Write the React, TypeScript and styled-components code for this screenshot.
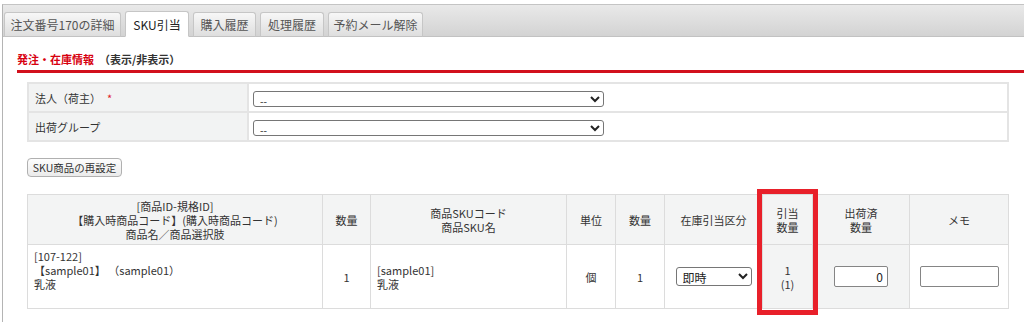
import styled, { createGlobalStyle } from 'styled-components';

const GlobalStyle = createGlobalStyle`
  html, body {
    margin: 0;
    background: #fff;
    overflow: hidden;
  }
  body {
    font-family: "Noto Sans CJK JP", "Noto Sans", sans-serif;
    font-size: 11px;
    color: #333;
  }
`;

/*
 *  panel + tabs
 */
const Panel = styled.div`
  margin: 4px 0 0 2px;
  width: 1040px;
  height: 330px;
  border-top: 1px solid #c4c4c4;
  border-left: 1px solid #b4b4b4;
`;

const TabStrip = styled.ul`
  display: flex;
  align-items: flex-end;
  gap: 4px;
  box-sizing: border-box;
  height: 32px;
  margin: 0;
  padding: 0 0 0 1px;
  list-style: none;
  background: linear-gradient(#e9e9e9, #d3d3d3);
  border-bottom: 1px solid #c2c2c2;
`;

const Tab = styled.li<{ $active?: boolean; $w: number }>`
  box-sizing: border-box;
  width: ${(p) => p.$w}px;
  height: ${(p) => (p.$active ? 26 : 25)}px;
  margin-bottom: -1px;
  display: flex;
  align-items: center;
  justify-content: center;
  border: 1px solid #c6c6c6;
  border-bottom-color: ${(p) => (p.$active ? '#fff' : '#c2c2c2')};
  border-radius: 3px 3px 0 0;
  background: ${(p) => (p.$active ? '#fff' : 'linear-gradient(#f7f7f7, #dedede)')};
  color: ${(p) => (p.$active ? '#222' : '#555')};
  font-size: 12px;
  white-space: nowrap;
`;

/*
 *  section heading
 */
const SectionHead = styled.div`
  margin: 0 6px 0 14px;
  padding: 14px 0 3px;
  line-height: 16px;
  border-bottom: 3px solid #d2101c;
  font-weight: bold;
  font-size: 11px;
`;

const SectionTitle = styled.span`
  color: #d7000f;
`;

const Toggle = styled.span`
  margin-left: 5px;
  color: #333;
`;

const Content = styled.div`
  padding: 9px 0 0 24px;
`;

/*
 *  form table
 */
const FormTable = styled.table`
  width: 982px;
  border-collapse: collapse;
  border: 2px solid #e4e4e4;
`;

const FormRow = styled.tr`
  height: 29px;
  border-bottom: 2px solid #e4e4e4;
`;

const Label = styled.th`
  width: 206px;
  padding: 0 6px;
  text-align: left;
  font-weight: normal;
  background: #f2f3f3;
  border-right: 2px solid #e4e4e4;
  color: #333;
`;

const Required = styled.span`
  margin-left: 6px;
  color: #e0202a;
`;

const Value = styled.td`
  padding: 0 4px;
`;

const Select = styled.select<{ $w: number }>`
  box-sizing: border-box;
  width: ${(p) => p.$w}px;
  height: ${(p) => (p.$w > 100 ? 16 : 19)}px;
  padding: 0 2px;
  border: 1px solid #767676;
  border-radius: 3px;
  background: #fff;
  font-family: inherit;
  font-size: ${(p) => (p.$w > 100 ? 10 : 12)}px;
  color: #222;
  vertical-align: middle;
`;

const ResetButton = styled.button`
  display: block;
  box-sizing: border-box;
  width: 95px;
  height: 19px;
  margin-top: 16px;
  padding: 0;
  border: 1px solid #b0b0b0;
  border-radius: 4px;
  background: linear-gradient(#fdfdfd, #ebebeb);
  font-family: inherit;
  font-size: 10.5px;
  color: #333;
`;

/*
 *  SKU table
 */
const TableWrap = styled.div`
  position: relative;
  width: 981px;
  margin-top: 17px;
`;

const SkuTable = styled.table`
  width: 981px;
  table-layout: fixed;
  border-collapse: collapse;
  border: 1px solid #dcdcdc;
  line-height: 14px;
`;

const Head = styled.th`
  height: 49px;
  padding: 0 4px;
  background: #f3f4f4;
  border: 1px solid #dcdcdc;
  font-weight: normal;
  text-align: center;
  color: #333;
`;

const Cell = styled.td<{ $align?: string; $shade?: boolean }>`
  height: 63px;
  padding: 0 6px;
  border: 1px solid #dcdcdc;
  text-align: ${(p) => p.$align || 'center'};
  background: ${(p) => (p.$shade ? '#f3f4f4' : '#fff')};
  color: #333;
`;

const NumInput = styled.input<{ $w: number; $right?: boolean }>`
  box-sizing: border-box;
  width: ${(p) => p.$w}px;
  height: 21px;
  padding: 0 4px;
  border: 1px solid #858585;
  border-radius: 2px;
  font-family: inherit;
  font-size: 12px;
  text-align: ${(p) => (p.$right ? 'right' : 'left')};
  color: #222;
`;

const Highlight = styled.div`
  position: absolute;
  left: 730px;
  top: -5px;
  width: 61px;
  height: 126px;
  box-sizing: border-box;
  border: 5px solid #e8202a;
  pointer-events: none;
`;

const tabs = [
  { label: '注文番号170の詳細', w: 117 },
  { label: 'SKU引当', w: 64, active: true },
  { label: '購入履歴', w: 63 },
  { label: '処理履歴', w: 64 },
  { label: '予約メール解除', w: 95 },
];

const cols = [295, 48, 196, 49, 49, 98, 50, 97, 99];

export default function App() {
  return (
    <>
      <GlobalStyle />
      <Panel>
        <TabStrip>
          {tabs.map((t) => (
            <Tab key={t.label} $w={t.w} $active={t.active}>
              {t.label}
            </Tab>
          ))}
        </TabStrip>

        <SectionHead>
          <SectionTitle>発注・在庫情報</SectionTitle>
          <Toggle>（表示/非表示）</Toggle>
        </SectionHead>

        <Content>
          <FormTable>
            <tbody>
              <FormRow>
                <Label>
                  法人（荷主）<Required>*</Required>
                </Label>
                <Value>
                  <Select $w={351}>
                    <option>--</option>
                  </Select>
                </Value>
              </FormRow>
              <FormRow>
                <Label>出荷グループ</Label>
                <Value>
                  <Select $w={351}>
                    <option>--</option>
                  </Select>
                </Value>
              </FormRow>
            </tbody>
          </FormTable>

          <ResetButton>SKU商品の再設定</ResetButton>

          <TableWrap>
            <SkuTable>
              <colgroup>
                {cols.map((w, i) => (
                  <col key={i} style={{ width: w }} />
                ))}
              </colgroup>
              <thead>
                <tr>
                  <Head>
                    [商品ID-規格ID]
                    <br />
                    【購入時商品コード】(購入時商品コード)
                    <br />
                    商品名／商品選択肢
                  </Head>
                  <Head>数量</Head>
                  <Head>
                    商品SKUコード
                    <br />
                    商品SKU名
                  </Head>
                  <Head>単位</Head>
                  <Head>数量</Head>
                  <Head>在庫引当区分</Head>
                  <Head>
                    引当
                    <br />
                    数量
                  </Head>
                  <Head>
                    出荷済
                    <br />
                    数量
                  </Head>
                  <Head>メモ</Head>
                </tr>
              </thead>
              <tbody>
                <tr>
                  <Cell $align="left">
                    [107-122]
                    <br />
                    【sample01】 （sample01）
                    <br />
                    乳液
                    <br />
                    &nbsp;
                  </Cell>
                  <Cell>1</Cell>
                  <Cell $align="left">
                    [sample01]
                    <br />
                    乳液
                  </Cell>
                  <Cell>個</Cell>
                  <Cell>1</Cell>
                  <Cell>
                    <Select $w={76}>
                      <option>即時</option>
                    </Select>
                  </Cell>
                  <Cell $shade>
                    1
                    <br />
                    (1)
                  </Cell>
                  <Cell $shade>
                    <NumInput $w={54} $right defaultValue="0" />
                  </Cell>
                  <Cell>
                    <NumInput $w={79} defaultValue="" />
                  </Cell>
                </tr>
              </tbody>
            </SkuTable>
            <Highlight />
          </TableWrap>
        </Content>
      </Panel>
    </>
  );
}
